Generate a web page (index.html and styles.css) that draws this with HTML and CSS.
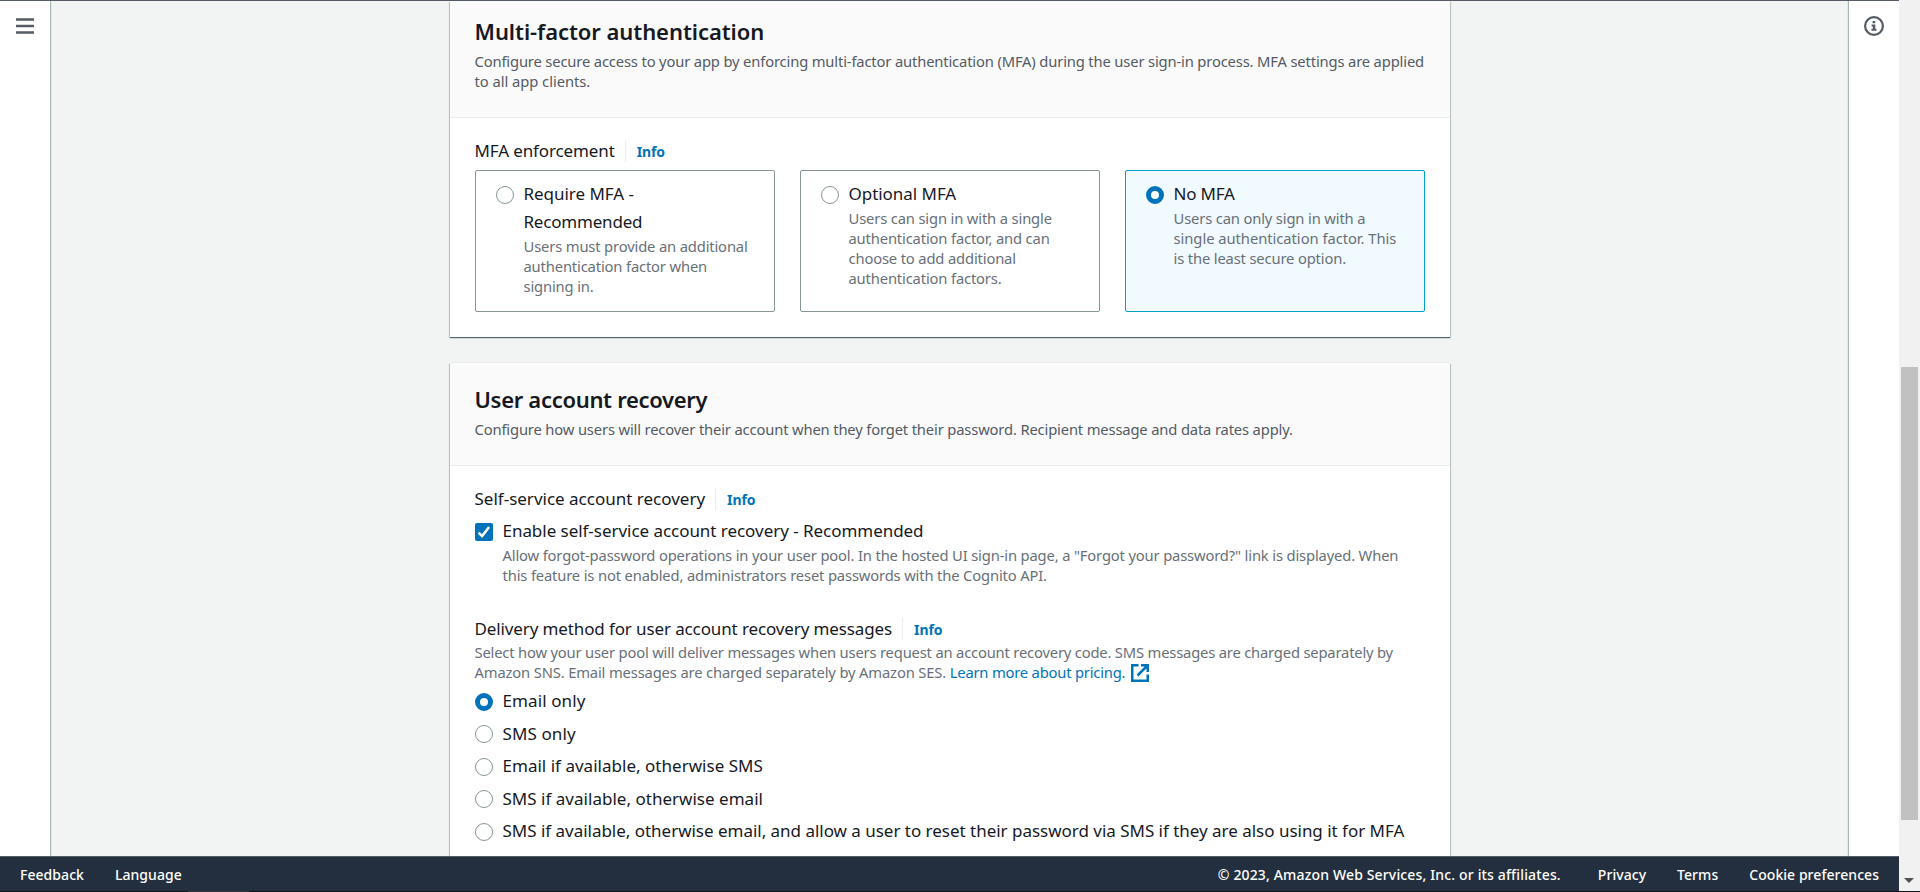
FILE: index.html
```html
<!DOCTYPE html>
<html lang="en">
<head>
<meta charset="utf-8">
<title>Create user pool</title>
<link rel="stylesheet" href="styles.css">
</head>
<body>
<div class="window">
  <div class="page">
    <div class="main">
      <nav class="rail rail-left">
        <svg class="icon-menu" width="18" height="16" viewBox="0 0 18 16"><path d="M0 1.5h18M0 8h18M0 14.5h18" stroke="#545b64" stroke-width="2.4"/></svg>
      </nav>
      <main class="content">
        <section class="card card-mfa">
          <header class="card-header">
            <h2 class="title">Multi-factor authentication</h2>
            <p class="desc">Configure secure access to your app by enforcing multi-factor authentication (MFA) during the user sign-in process. MFA settings are applied<br><span class="wide">to all app clients.</span></p>
          </header>
          <div class="card-body">
            <div class="label-row"><span class="label label-tight">MFA enforcement</span><a class="info">Info</a></div>
            <div class="tiles">
              <div class="tile">
                <span class="radio"></span>
                <div>
                  <div class="option">Require MFA -<br><span class="option-tight">Recommended</span></div>
                  <p class="hint">Users must provide an additional<br>authentication factor when<br>signing in.</p>
                </div>
              </div>
              <div class="tile">
                <span class="radio"></span>
                <div>
                  <div class="option">Optional MFA</div>
                  <p class="hint">Users can sign in with a single<br>authentication factor, and can<br>choose to add additional<br>authentication factors.</p>
                </div>
              </div>
              <div class="tile tile-selected">
                <span class="radio radio-on"></span>
                <div>
                  <div class="option option-tight">No MFA</div>
                  <p class="hint">Users can only sign in with a<br><span class="wide">single authentication factor. This</span><br>is the least secure option.</p>
                </div>
              </div>
            </div>
          </div>
        </section>
        <section class="card card-recovery">
          <header class="card-header">
            <h2 class="title title-tight">User account recovery</h2>
            <p class="desc">Configure how users will recover their account when they forget their password. Recipient message and data rates apply.</p>
          </header>
          <div class="card-body">
            <div class="label-row"><span class="label">Self-service account recovery</span><a class="info">Info</a></div>
            <div class="check-row">
              <svg class="checkbox" width="18" height="18" viewBox="0 0 18 18"><rect width="18" height="18" rx="2" fill="#0073bb"/><path d="M3.6 9.6l3.5 3.5 7-9" fill="none" stroke="#fff" stroke-width="2.5"/></svg>
              <div>
                <div class="option">Enable self-service account recovery - Recommended</div>
                <p class="hint">Allow forgot-password operations in your user pool. In the hosted UI sign-in page, a "Forgot your password?" link is displayed. When<br>this feature is not enabled, administrators reset passwords with the Cognito API.</p>
              </div>
            </div>
            <div class="label-row label-row-delivery"><span class="label label-tight">Delivery method for user account recovery messages</span><a class="info">Info</a></div>
            <p class="hint hint-delivery"><span class="narrow">Select how your user pool will deliver messages when users request an account recovery code. SMS messages are charged separately by</span><br>Amazon SNS. Email messages are charged separately by Amazon SES. <a class="link">Learn more about pricing.<svg class="icon-external" width="18" height="18" viewBox="0 0 18 18"><path d="M7.5 1.25H1.25v15.5h15.5V10.5M10 1.25h6.75V8M16.5 1.5L6.5 11.5" fill="none" stroke="#0073bb" stroke-width="2.5"/></svg></a></p>
            <div class="radios">
              <div class="radio-row"><span class="radio radio-on"></span><span class="option option-loose">Email only</span></div>
              <div class="radio-row"><span class="radio"></span><span class="option option-loose">SMS only</span></div>
              <div class="radio-row"><span class="radio"></span><span class="option option-even">Email if available, otherwise SMS</span></div>
              <div class="radio-row"><span class="radio"></span><span class="option option-even">SMS if available, otherwise email</span></div>
              <div class="radio-row"><span class="radio"></span><span class="option option-long">SMS if available, otherwise email, and allow a user to reset their password via SMS if they are also using it for MFA</span></div>
            </div>
          </div>
        </section>
      </main>
      <aside class="rail rail-right">
        <svg class="icon-info" width="20" height="20" viewBox="0 0 20 20"><circle cx="10" cy="10" r="8.9" fill="none" stroke="#545b64" stroke-width="2.2"/><path d="M8.6 5h2.6v2.3H8.6zM7.6 8.6h3.7v4.2h1.2v2H7.4v-2h1.4v-2.2H7.6z" fill="#545b64"/></svg>
      </aside>
    </div>
    <footer class="footer">
      <span>Feedback</span><span>Language</span>
      <span class="copyright">© 2023, Amazon Web Services, Inc. or its affiliates.</span><span>Privacy</span><span>Terms</span><span>Cookie preferences</span>
    </footer>
  </div>
  <div class="scrollbar"><div class="thumb"></div><div class="arrow"></div></div>
</div>
<div class="taskbar"><span class="taskbar-item"></span></div>
</body>
</html>
```
FILE: styles.css
```css
* { box-sizing: border-box; }
body {
  margin: 0;
  width: 1920px;
  height: 892px;
  overflow: hidden;
  background: #f2f3f3;
  color: #16191f;
  font-family: "Noto Sans", "Open Sans", sans-serif;
}
h2, p { margin: 0; }
.window { display: flex; height: 891px; }
.page { display: flex; flex-direction: column; width: 1899px; border-top: 1px solid #545b64; }
.main { display: flex; justify-content: space-between; height: 855px; overflow: hidden; }
.rail { background: #fff; }
.rail-left { width: 50px; padding: 17px 0 0 16px; box-shadow: 1px 0 1px #aab7b8; }
.rail-right { width: 50px; padding: 15px 0 0 15px; box-shadow: -1px 0 1px #aab7b8; }
.rail svg { display: block; }
.content { width: 1000px; }
.card {
  background: #fff;
  box-shadow: 0 -1px 0 0 #eaeded, 0 1px 1px 0 rgba(0,28,36,.5), 1px 1px 1px 0 rgba(0,28,36,.15), -1px 1px 1px 0 rgba(0,28,36,.15);
}
.card-header { padding: 16px 25px 26px; background: #fafafa; border-bottom: 1px solid #eaeded; }
.card-recovery { margin-top: 26px; }
.card-recovery .card-header { padding-top: 22px; }
.card-body { padding: 22px 25px 25px; }
.title { font-size: 22px; line-height: 28px; font-weight: 600; letter-spacing: -0.06px; white-space: nowrap; }
.title-tight { letter-spacing: -0.31px; }
.desc, .hint { font-size: 14.75px; line-height: 20px; letter-spacing: -0.153px; white-space: nowrap; }
.desc { margin-top: 6px; color: #545b64; }
.hint { color: #687078; }
.wide { letter-spacing: -0.04px; }
.narrow { letter-spacing: -0.183px; }
.label-row { display: flex; height: 22px; line-height: 22px; }
.label { font-size: 17px; white-space: nowrap; }
.label-tight { letter-spacing: -0.12px; }
.info { margin-left: 10px; padding-left: 11px; border-left: 1px solid #eaeded; color: #0073bb; font-size: 14px; line-height: 24px; font-weight: 700; letter-spacing: -0.1px; }
.tiles { display: grid; grid-template-columns: repeat(3, 300px); gap: 25px; margin-top: 8px; }
.tile { display: flex; gap: 10px; height: 142px; padding: 9px 20px 0; border: 1px solid #879596; border-radius: 2px; }
.tile-selected { background: #f1faff; border-color: #00a1c9; }
.option { font-size: 17px; line-height: 27px; letter-spacing: -0.04px; white-space: nowrap; }
.option-tight { letter-spacing: -0.2px; }
.option-loose { letter-spacing: 0.1px; }
.option-even { letter-spacing: 0.02px; }
.option-long { letter-spacing: -0.02px; }
.radio { flex: none; width: 18px; height: 18px; margin-top: 5.75px; border: 1px solid #879596; border-radius: 50%; background: #fff; }
.tile .radio { margin-top: 6px; }
.tile .option { line-height: 27.5px; }
.tile .hint { margin-top: 0.5px; }
.radio-on { border: 5px solid #0073bb; }
.check-row { display: flex; gap: 10px; margin-top: 7px; }
.check-row .hint { margin-top: 1px; }
.checkbox { flex: none; margin-top: 6px; }
.label-row-delivery { margin-top: 33px; }
.hint-delivery { margin-top: 2px; height: 40px; }
.link { color: #0073bb; letter-spacing: -0.2px; }
.icon-external { margin-left: 6px; vertical-align: -4px; }
.radios { display: flex; flex-direction: column; gap: 5.5px; margin-top: 5px; }
.radio-row { display: flex; gap: 10px; height: 27px; }
.footer { display: flex; align-items: center; gap: 31px; height: 35px; padding: 0 20px; border-top: 1px solid #545b64; background: #232f3e; color: #fff; font-size: 14px; font-weight: 500; letter-spacing: 0.05px; white-space: nowrap; }
.copyright { margin-left: auto; margin-right: 6px; letter-spacing: 0.15px; }
.scrollbar { display: flex; flex-direction: column; width: 21px; padding: 367px 2px 0; background: #f1f1f1; }
.thumb { height: 453px; background: #c1c1c1; }
.arrow { width: 0; height: 0; margin: 58px 0 0 3px; border: 5px solid transparent; border-top-color: #505050; border-bottom: 0; }
.taskbar { height: 1px; background: #10151c; }
.taskbar-item { display: block; width: 61px; height: 1px; margin-left: 188px; background: #33373c; }
```
